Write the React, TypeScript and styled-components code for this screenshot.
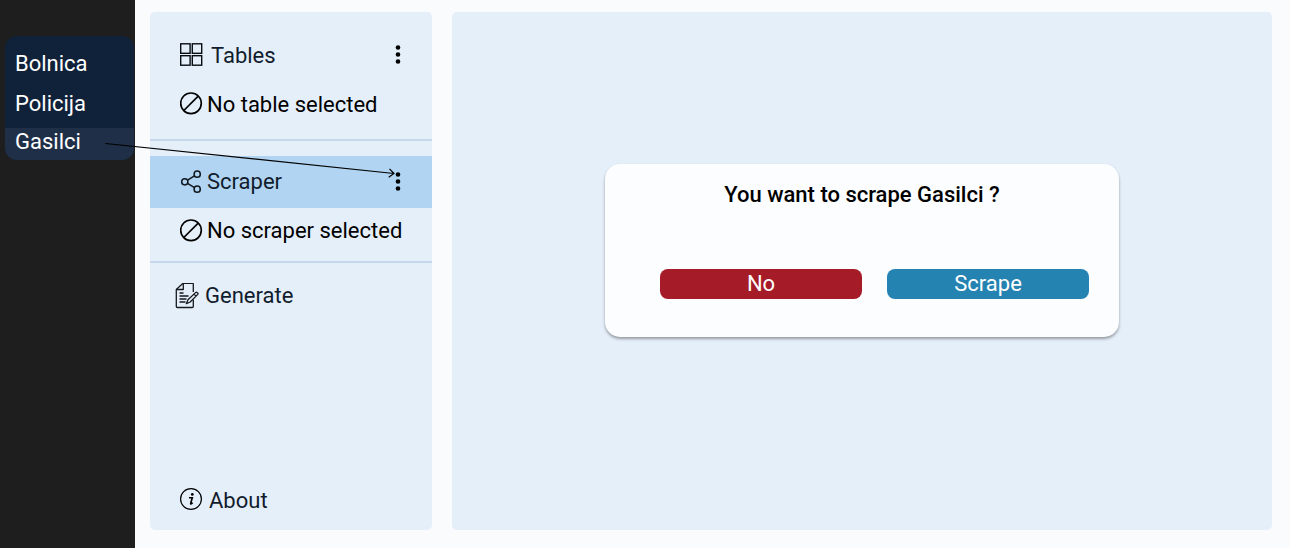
import React from "react";
import styled, { createGlobalStyle, css } from "styled-components";

const GlobalStyle = createGlobalStyle`
  *, *::before, *::after { box-sizing: border-box; }
  body {
    margin: 0;
    background: #f9fbfd;
    font-family: Roboto, "Liberation Sans", sans-serif;
    font-size: 22px;
    line-height: 26px;
    color: #000;
  }
`;

const plainButton = css`
  border: 0;
  padding: 0;
  background: none;
  font: inherit;
  color: inherit;
  cursor: pointer;
`;

const Page = styled.div`
  position: relative;
  display: flex;
  min-height: 100vh;
`;

const Rail = styled.aside`
  flex: 0 0 135px;
  padding: 36px 1px 0 5px;
  background: #1e1e1e;
`;

const Menu = styled.ul`
  list-style: none;
  margin: 0;
  padding: 12px 0 0;
  border-radius: 12px;
  overflow: hidden;
  background: #10213a;
`;

const MenuItem = styled.button<{ $active?: boolean }>`
  ${plainButton}
  display: block;
  width: 100%;
  height: ${(p) => (p.$active ? 32 : 40)}px;
  padding: ${(p) => (p.$active ? "0 10px 4px" : "0 10px 8px")};
  text-align: left;
  color: #fff;
  background: ${(p) => (p.$active ? "#1f2f47" : "transparent")};
`;

const Workspace = styled.div`
  flex: 1;
  display: flex;
  gap: 20px;
  padding: 12px 18px 18px 15px;
`;

const Sidebar = styled.nav`
  flex: 0 0 282px;
  display: flex;
  flex-direction: column;
  padding: 17px 0 4px;
  border-radius: 5px;
  background: #e5effa;
`;

const Section = styled.section<{ $space: number; $after: number }>`
  padding-bottom: ${(p) => p.$space}px;
  margin-bottom: ${(p) => p.$after}px;
  border-bottom: 2px solid #c5d7ea;
`;

const Row = styled.div<{ $active?: boolean }>`
  display: flex;
  align-items: center;
  justify-content: space-between;
  height: 52px;
  padding: 0 24px 0 30px;
  background: ${(p) => (p.$active ? "#b0d4f2" : "transparent")};
`;

const NavButton = styled.button<{ $gap: number }>`
  ${plainButton}
  display: flex;
  align-items: center;
  gap: ${(p) => p.$gap}px;
  color: #111c2d;
`;

const Label = styled.span`
  padding-top: 2px;
`;

const DocumentRow = styled(Row)`
  padding-left: 25px;
`;

const FooterRow = styled(Row)`
  margin-top: auto;
`;

const MoreButton = styled.button`
  ${plainButton}
  display: flex;
`;

const Status = styled.p`
  display: flex;
  align-items: center;
  gap: 4px;
  height: 45px;
  margin: 0;
  padding-left: 30px;
`;

const Main = styled.main`
  flex: 1;
  display: flex;
  justify-content: center;
  align-items: flex-start;
  padding: 152px 20px 20px;
  border-radius: 5px;
  background: #e5effa;
`;

const Dialog = styled.section`
  width: 100%;
  max-width: 514px;
  padding: 18px 30px 38px 55px;
  border-radius: 15px;
  background: #fcfdff;
  box-shadow: 0 2px 3px rgba(0, 0, 0, 0.35);
`;

const Title = styled.h1`
  margin: 0 0 61px -25px;
  font-size: 22px;
  font-weight: 500;
  line-height: 26px;
  text-align: center;
`;

const Actions = styled.div`
  display: grid;
  grid-template-columns: 1fr 1fr;
  gap: 25px;
`;

const ActionButton = styled.button<{ $tone: string }>`
  ${plainButton}
  height: 30px;
  border-radius: 8px;
  color: #fff;
  background: ${(p) => p.$tone};
`;

const Pointer = styled.svg`
  position: absolute;
  left: 100px;
  top: 138px;
  pointer-events: none;
`;

const TablesIcon = () => (
  <svg width="23" height="24" viewBox="0 0 23 24" fill="none" stroke="#080d12" strokeWidth="1.4" aria-hidden="true">
    <rect x="0.7" y="0.8" width="9.4" height="9.5" />
    <rect x="12.3" y="0.8" width="9.4" height="9.5" />
    <rect x="0.7" y="12.7" width="9.4" height="9.5" />
    <rect x="12.3" y="12.7" width="9.4" height="9.5" />
  </svg>
);

const NoneIcon = () => (
  <svg width="23" height="23" viewBox="0 0 23 23" fill="none" stroke="#000" strokeWidth="1.7" aria-hidden="true">
    <circle cx="11" cy="11.3" r="10.3" />
    <path d="M3.8 18.5 18.2 4.1" />
  </svg>
);

const ShareIcon = () => (
  <svg width="23" height="24" viewBox="0 0 23 24" fill="none" stroke="#101820" strokeWidth="1.5" aria-hidden="true">
    <circle cx="4.8" cy="11.8" r="3.1" />
    <circle cx="17.2" cy="4.200" r="3.1" />
    <circle cx="17.2" cy="19.2" r="3.1" />
    <path d="M7.5 10.2 14.5 5.800M7.5 13.4l7 4.2" />
  </svg>
);

const DocumentIcon = () => (
  <svg width="24" height="26" viewBox="0 0 24 26" fill="none" stroke="#15191e" strokeWidth="1.3" strokeLinejoin="round" aria-hidden="true">
    <path d="M18.3 9V1a.7.7 0 0 0-.7-.7H8L1.300 6.500v17a1 1 0 0 0 1 1h15a1 1 0 0 0 1-1v-7" />
    <path d="M8.300.500v6H1.500" />
    <path d="M4.500 10h4M4.500 13h9M4.500 16h7M4.500 19h6" />
    <path d="m11.300 20.700 1.700-3.900 7.800-7.400a.9.9 0 0 1 1.200 0l.8.800a.9.9 0 0 1 0 1.200l-7.600 7.600zM19 11.100l2 2" fill="#e5effa" />
  </svg>
);

const InfoIcon = () => (
  <svg width="23" height="24" viewBox="0 0 23 24" aria-hidden="true">
    <circle cx="11" cy="11" r="10.400" fill="none" stroke="#000" strokeWidth="1.200" />
    <circle cx="12.300" cy="6.400" r="1.400" />
    <path d="M9 9.800h3.300L10.700 15.200q-.2 1.100.5.700l1.500-1.100" fill="none" stroke="#000" strokeWidth="1.600" />
  </svg>
);

const DotsIcon = () => (
  <svg width="20" height="24" viewBox="0 0 20 24" aria-hidden="true">
    <circle cx="10" cy="4.500" r="2.300" />
    <circle cx="10" cy="11.500" r="2.300" />
    <circle cx="10" cy="18.500" r="2.300" />
  </svg>
);

const services = ["Bolnica", "Policija", "Gasilci"];

export default function App() {
  const selected = "Gasilci";
  return (
    <>
      <GlobalStyle />
      <Page>
        <Rail>
          <Menu>
            {services.map((name) => (
              <li key={name}>
                <MenuItem $active={name === selected}>{name}</MenuItem>
              </li>
            ))}
          </Menu>
        </Rail>
        <Workspace>
          <Sidebar>
            <Section $space={13} $after={15}>
              <Row>
                <NavButton $gap={8}>
                  <TablesIcon />
                  <Label>Tables</Label>
                </NavButton>
                <MoreButton aria-label="Table options">
                  <DotsIcon />
                </MoreButton>
              </Row>
              <Status>
                <NoneIcon />
                <Label>No table selected</Label>
              </Status>
            </Section>
            <Section $space={8} $after={7}>
              <Row $active>
                <NavButton $gap={4}>
                  <ShareIcon />
                  <span>Scraper</span>
                </NavButton>
                <MoreButton aria-label="Scraper options">
                  <DotsIcon />
                </MoreButton>
              </Row>
              <Status>
                <NoneIcon />
                <span>No scraper selected</span>
              </Status>
            </Section>
            <DocumentRow>
              <NavButton $gap={6}>
                <DocumentIcon />
                <span>Generate</span>
              </NavButton>
            </DocumentRow>
            <FooterRow>
              <NavButton $gap={6}>
                <InfoIcon />
                <Label>About</Label>
              </NavButton>
            </FooterRow>
          </Sidebar>
          <Main>
            <Dialog role="dialog" aria-labelledby="dialog-title">
              <Title id="dialog-title">You want to scrape {selected} ?</Title>
              <Actions>
                <ActionButton $tone="#a61b28">No</ActionButton>
                <ActionButton $tone="#2583b2">Scrape</ActionButton>
              </Actions>
            </Dialog>
          </Main>
        </Workspace>
        <Pointer width="300" height="44" viewBox="0 0 300 44" fill="none" stroke="#000" strokeWidth="1.200" aria-hidden="true">
          <path d="M5.500 5.500 294 35.500M289.500 30.800l4.500 4.700-5.300 3.700" />
        </Pointer>
      </Page>
    </>
  );
}
